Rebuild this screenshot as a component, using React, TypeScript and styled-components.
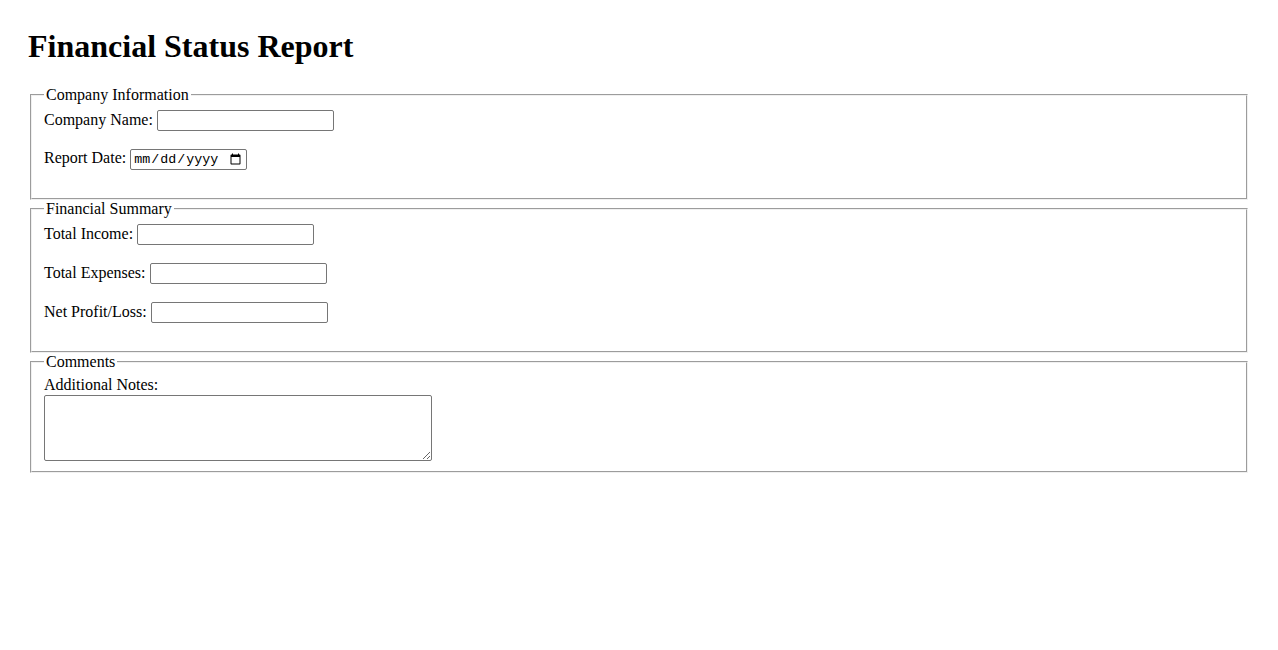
import styled, { createGlobalStyle } from "styled-components";

const GlobalStyle = createGlobalStyle`
  body {
    margin: 8px;
    background: #fff;
    color: #000;
    font-family: "Liberation Serif", "Times New Roman", serif;
    font-size: 16px;
  }
`;

const Container = styled.div`
  padding: 20px;
`;

const Title = styled.h1`
  margin: 0 0 21.44px;
  font-size: 32px;
  font-weight: bold;
`;

const Section = styled.fieldset`
  margin: 0 2px;
  padding: 0.35em 0.75em 0.625em;
  border: 2px groove #f0f0f0;
`;

const Legend = styled.legend`
  padding: 0 2px;
`;

const FormGroup = styled.div<{ $last?: boolean }>`
  margin-bottom: ${({ $last }) => ($last ? "0" : "18px")};
`;

const Label = styled.label<{ $block?: boolean }>`
  display: ${({ $block }) => ($block ? "block" : "inline")};
  margin-bottom: ${({ $block }) => ($block ? "1px" : "0")};
`;

const TextInput = styled.input`
  box-sizing: border-box;
  width: 177px;
  height: 21px;
  padding: 1px 2px;
  border: 1px solid #767676;
  border-radius: 2px;
  font-family: "Liberation Sans", Arial, sans-serif;
  font-size: 13.333px;
`;

const DateInput = styled.input`
  box-sizing: border-box;
  width: 117px;
  height: 21px;
  padding: 1px 2px;
  border: 1px solid #767676;
  border-radius: 2px;
  font-family: "Liberation Mono", "Courier New", monospace;
  font-size: 13.333px;
`;

const Notes = styled.textarea`
  display: block;
  box-sizing: border-box;
  width: 388px;
  height: 66px;
  padding: 2px;
  border: 1px solid #767676;
  border-radius: 2px;
  font-family: "Liberation Mono", "Courier New", monospace;
  font-size: 13.333px;
`;

export default function App() {
  return (
    <>
      <GlobalStyle />
      <Container>
        <Title>Financial Status Report</Title>
        <form>
          <Section>
            <Legend>Company Information</Legend>
            <FormGroup>
              <Label htmlFor="companyName">Company Name:</Label>{" "}
              <TextInput type="text" id="companyName" />
            </FormGroup>
            <FormGroup>
              <Label htmlFor="reportDate">Report Date:</Label>{" "}
              <DateInput type="date" id="reportDate" />
            </FormGroup>
          </Section>
          <Section>
            <Legend>Financial Summary</Legend>
            <FormGroup>
              <Label htmlFor="totalIncome">Total Income:</Label>{" "}
              <TextInput type="text" id="totalIncome" />
            </FormGroup>
            <FormGroup>
              <Label htmlFor="totalExpenses">Total Expenses:</Label>{" "}
              <TextInput type="text" id="totalExpenses" />
            </FormGroup>
            <FormGroup>
              <Label htmlFor="netProfit">Net Profit/Loss:</Label>{" "}
              <TextInput type="text" id="netProfit" />
            </FormGroup>
          </Section>
          <Section>
            <Legend>Comments</Legend>
            <FormGroup $last>
              <Label $block htmlFor="notes">Additional Notes:</Label>
              <Notes id="notes" />
            </FormGroup>
          </Section>
        </form>
      </Container>
    </>
  );
}
